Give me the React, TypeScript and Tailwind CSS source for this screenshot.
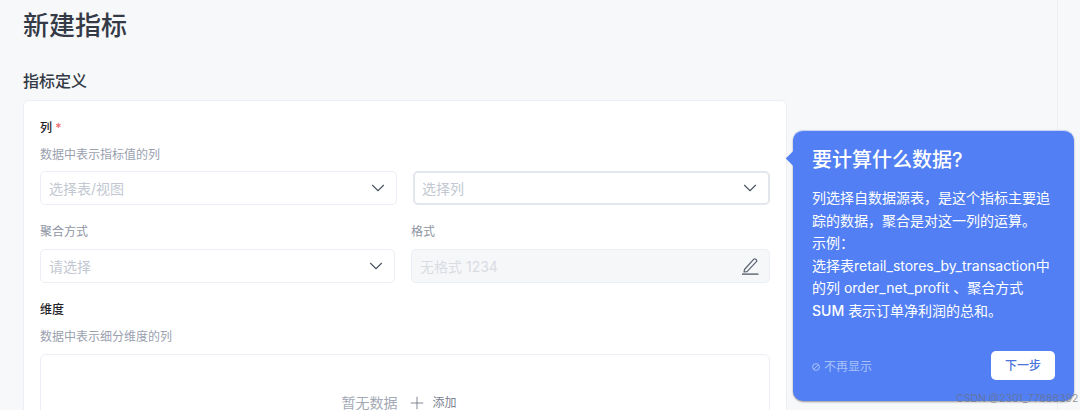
import { ChevronDown, Plus } from 'lucide-react';

function SelectBox({ placeholder, className }: { placeholder: string; className?: string }) {
  return (
    <div className={`h-[34px] flex items-center justify-between bg-white rounded-[5px] ${className}`}>
      <span className="text-[14px] text-[#c3c8d2]">{placeholder}</span>
      <ChevronDown className="w-[22px] h-[22px] text-[#4b5563]" strokeWidth={1.2} />
    </div>
  );
}

function PencilIcon() {
  return (
    <svg className="w-[18px] h-[18px] text-[#5b6372]" viewBox="0 0 18 18" fill="none" stroke="currentColor" strokeWidth="1.2" strokeLinejoin="round">
      <path d="M3.5 12.5 L12.8 2.2 C13.3 1.7 14 1.7 14.6 2.2 L15.4 3 C15.9 3.5 15.9 4.2 15.4 4.7 L6 14.6 L3 15 Z" />
      <path d="M1 17.1 H17.5" strokeWidth="1.4" />
    </svg>
  );
}

function GuideTip() {
  return (
    <div className="absolute left-[793px] top-[130px] w-[281px] h-[271px] bg-[#5280f4] rounded-[10px] border-t border-[#c9d5f5] shadow-[0_1px_2px_rgba(0,0,0,0.4)] px-[19px] pt-[15px] text-white">
      <div className="absolute left-[-5px] top-[22px] w-[11px] h-[11px] rotate-45 bg-[#5280f4]" />
      <h3 className="text-[20px] leading-[28px] font-medium">要计算什么数据?</h3>
      <p className="mt-[13px] text-[14px] leading-[22.5px] w-[246px]">
        列选择自数据源表，是这个指标主要追踪的数据，聚合是对这一列的运算。
        <br />
        示例：
        <br />
        选择表retail_stores_by_transaction中的列 order_net_profit 、聚合方式
        <br />
        <span className="font-medium">SUM</span> 表示订单净利润的总和。
      </p>
      <div className="absolute left-[19px] right-[19px] bottom-[21px] flex items-center justify-between">
        <div className="flex items-center gap-[4px] text-[12px] text-[#a9c0f8] pt-[3px]">
          <svg className="w-[8px] h-[8px]" viewBox="0 0 8 8" fill="none" stroke="currentColor" strokeWidth="1">
            <circle cx="4" cy="4" r="3.4" />
            <path d="M1.6 6.4 L6.4 1.6" />
          </svg>
          <span>不再显示</span>
        </div>
        <button className="w-[64px] h-[29px] bg-white rounded-[5px] text-[12px] font-medium text-[#4a74d9]">下一步</button>
      </div>
    </div>
  );
}

export default function App() {
  return (
    <div
      className="relative w-[1080px] h-[410px] overflow-hidden bg-[#f7f8fa]"
      style={{ fontFamily: 'Inter, "Noto Sans CJK SC", sans-serif' }}
    >
      <div className="w-[1058px] h-[410px] border-r border-[#eeeff3] pl-[23px] pr-[270px]">
        <h1 className="pt-[7px] text-[26px] leading-[38px] font-medium text-[#343a46]">新建指标</h1>
        <h2 className="mt-[25px] text-[16px] leading-[22px] font-medium text-[#343a46]">指标定义</h2>

        <div className="mt-[8px] h-[400px] bg-white border border-[#eceef5] rounded-[6px] px-[16px] pt-[18px]">
          <div className="text-[12px] leading-[18px] font-medium text-[#1f2329]">
            列 <span className="text-[#f0666b]">*</span>
          </div>
          <p className="mt-[9px] text-[12px] leading-[18px] text-[#9aa1af]">数据中表示指标值的列</p>
          <div className="mt-[7px] flex gap-[16px]">
            <SelectBox placeholder="选择表/视图" className="w-[357px] border border-[#eceef5] pl-[8px] pr-[7px]" />
            <SelectBox placeholder="选择列" className="w-[357px] border-2 border-[#e3e6ec] pl-[7px] pr-[7px]" />
          </div>

          <div className="mt-[18px] flex gap-[16px]">
            <div className="w-[355px]">
              <label className="block text-[12px] leading-[18px] text-[#8e95a3]">聚合方式</label>
              <SelectBox placeholder="请选择" className="mt-[8px] border border-[#eceef5] pl-[8px] pr-[7px]" />
            </div>
            <div className="w-[359px]">
              <label className="block text-[12px] leading-[18px] text-[#8e95a3]">格式</label>
              <div className="mt-[8px] h-[34px] flex items-center justify-between pl-[8px] pr-[10px] bg-[#f6f7f9] border border-[#eceef5] rounded-[5px]">
                <span className="text-[14px] text-[#d9dce3]">无格式 1234</span>
                <PencilIcon />
              </div>
            </div>
          </div>

          <div className="mt-[18px] text-[12px] leading-[18px] font-medium text-[#1f2329]">维度</div>
          <p className="mt-[9px] text-[12px] leading-[18px] text-[#9aa1af]">数据中表示细分维度的列</p>
          <div className="mt-[8px] h-[120px] border border-[#eceef5] rounded-[6px] flex justify-center items-start pt-[38px] pr-[12px]">
            <span className="text-[14px] leading-[20px] text-[#a3a9b5]">暂无数据</span>
            <div className="ml-[10px] flex items-center gap-[5px] h-[20px]">
              <Plus className="w-[20px] h-[20px] text-[#6b7280]" strokeWidth={1} />
              <span className="text-[12px] text-[#7b8290]">添加</span>
            </div>
          </div>
        </div>
      </div>

      <GuideTip />

      <span className="absolute left-[956px] top-[392px] whitespace-nowrap text-[10.5px] leading-[14px] text-[#6b6f78]/70">CSDN @2301_77888392</span>
    </div>
  );
}
